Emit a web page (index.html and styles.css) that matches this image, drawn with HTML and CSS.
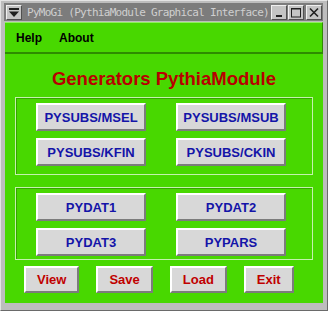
FILE: index.html
```html
<!DOCTYPE html>
<html lang="en">
<head>
    <meta charset="UTF-8">
    <title>PyMoGi (PythiaModule Graphical Interface)</title>
    <link rel="stylesheet" href="styles.css">
</head>
<body>
    <div class="window">
        <!-- Barra de titulo -->
        <div class="titlebar">
            <span class="tb-btn">
                <svg width="12" height="11" viewBox="0 0 12 11">
                    <rect x="1" y="1" width="10" height="2" fill="#202020"/>
                    <polygon points="1,4.5 11,4.5 6,10" fill="#202020"/>
                </svg>
            </span>
            <span class="tb-title">PyMoGi (PythiaModule Graphical Interface)</span>
            <span class="tb-btn">
                <svg width="12" height="11" viewBox="0 0 12 11">
                    <rect x="3" y="8" width="6" height="2" fill="#202020"/>
                </svg>
            </span>
            <span class="tb-btn">
                <svg width="12" height="11" viewBox="0 0 12 11">
                    <rect x="1.5" y="1.5" width="9" height="8.5" fill="none" stroke="#202020" stroke-width="1"/>
                    <rect x="1.5" y="1" width="9" height="1.5" fill="#202020"/>
                </svg>
            </span>
            <span class="tb-btn tb-close">
                <svg width="12" height="11" viewBox="0 0 12 11">
                    <path d="M2 1.5 L10 9.5 M10 1.5 L2 9.5" stroke="#202020" stroke-width="1.6"/>
                </svg>
            </span>
        </div>

        <div class="client">
            <div class="menubar">
                <span class="menu-item">Help</span>
                <span class="menu-item">About</span>
            </div>

            <div class="main">
                <h1>Generators PythiaModule</h1>

                <div class="group group-subs">
                    <button class="btn">PYSUBS/MSEL</button>
                    <button class="btn">PYSUBS/MSUB</button>
                    <button class="btn">PYSUBS/KFIN</button>
                    <button class="btn">PYSUBS/CKIN</button>
                </div>

                <div class="group group-dat">
                    <button class="btn">PYDAT1</button>
                    <button class="btn">PYDAT2</button>
                    <button class="btn">PYDAT3</button>
                    <button class="btn">PYPARS</button>
                </div>

                <div class="actions">
                    <button class="btn act">View</button>
                    <button class="btn act">Save</button>
                    <button class="btn act">Load</button>
                    <button class="btn act">Exit</button>
                </div>
            </div>
        </div>
    </div>
</body>
</html>
```

FILE: styles.css
```css
body {
    margin: 0;
    padding: 0;
    font-family: 'Liberation Sans', Arial, sans-serif;
}

.window {
    width: 328px;
    height: 311px;
    box-sizing: border-box;
    padding: 3px 4px 8px 4px;
    background-color: #bdbdbd;
    border-top: 1px solid #e4e4e4;
    border-left: 1px solid #e4e4e4;
    border-right: 1px solid #6a6a6a;
    border-bottom: 1px solid #6a6a6a;
}

.titlebar {
    display: flex;
    align-items: center;
    height: 18px;
    box-sizing: border-box;
    padding: 1px 1px 1px 2px;
    margin-top: -1px;
    margin-left: -1px;
    background-color: #7c7c7c;
}

.tb-btn {
    display: flex;
    align-items: center;
    justify-content: center;
    flex-shrink: 0;
    width: 16px;
    height: 15px;
    box-sizing: border-box;
    background-color: #c4c4c4;
    border-top: 1px solid #f0f0f0;
    border-left: 1px solid #f0f0f0;
    border-right: 1px solid #505050;
    border-bottom: 1px solid #505050;
    margin-right: 1px;
}

.tb-close {
    margin-left: 1px;
    margin-right: 0;
}

.tb-title {
    flex: 1;
    white-space: nowrap;
    margin-left: 4px;
    font-family: 'DejaVu Sans Mono', monospace;
    font-size: 11px;
    letter-spacing: -0.72px;
    color: #cfcfcf;
}

.client {
    height: 281px;
    margin: 1px 0 0 0;
    background-color: #48d800;
    display: flex;
    flex-direction: column;
}

.menubar {
    display: flex;
    align-items: center;
    gap: 17px;
    height: 32px;
    box-sizing: border-box;
    padding-left: 11px;
    border-top: 1px solid #90f060;
    border-bottom: 2px solid #2e8c00;
    border-right: 1px solid #2e8c00;
}

.menu-item {
    font-size: 12px;
    font-weight: bold;
    color: #000000;
}

h1 {
    margin: 14px 0 7px 0;
    font-size: 18.5px;
    line-height: 22px;
    font-weight: bold;
    text-align: center;
    color: #b80000;
}

.group {
    display: grid;
    grid-template-columns: 110px 110px;
    column-gap: 30px;
    row-gap: 7px;
    margin: 0 10px;
    padding: 5px 0 8px 20px;
    border: 1px solid #c4f2ae;
    box-shadow: inset 1px 1px 0 #36a400;
}

.group-dat {
    margin-top: 12px;
    padding-bottom: 3px;
}

.btn {
    height: 28px;
    box-sizing: border-box;
    padding: 0;
    background-color: #d8d8d8;
    border-style: solid;
    border-width: 2px;
    border-color: #ffffff #7c7c7c #7c7c7c #ffffff;
    font-family: 'Liberation Sans', Arial, sans-serif;
    font-size: 13px;
    font-weight: bold;
    color: #1414a8;
    cursor: pointer;
}

.actions {
    display: flex;
    gap: 17px;
    margin-top: 6px;
    padding-left: 19px;
}

.act {
    height: 27px;
    padding: 0 11px;
    color: #c00000;
}
```
